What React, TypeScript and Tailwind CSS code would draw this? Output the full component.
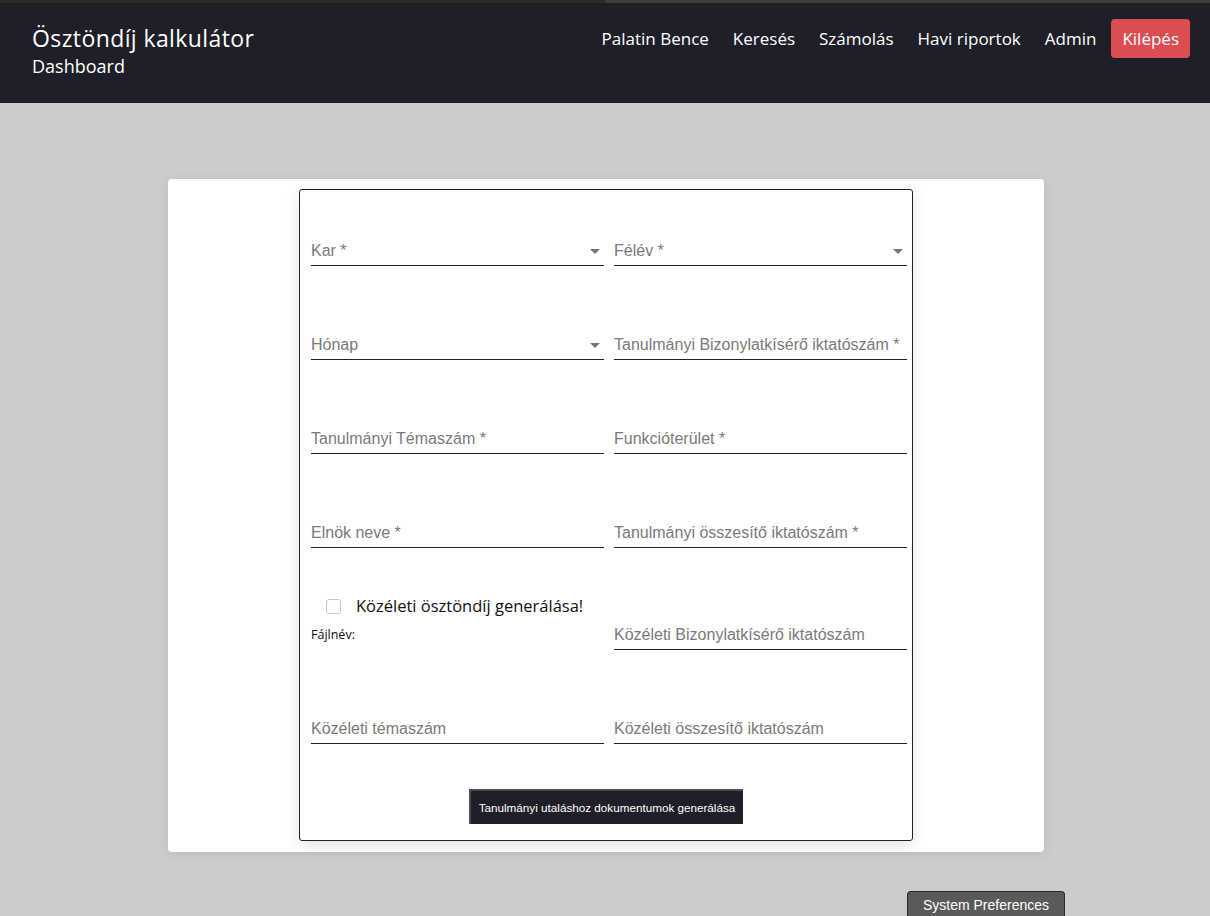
import { useState } from "react";

const navItems = ["Palatin Bence", "Keresés", "Számolás", "Havi riportok", "Admin"];

function Field({ label, select }: { label: string; select?: boolean }) {
  return (
    <div className="flex h-[48px] items-end justify-between border-b border-[#222228] pb-[4px] pr-[4px]">
      <span className="text-[16px] leading-[20px] text-[#7a7a7a] font-['Liberation_Sans',Arial,sans-serif]">
        {label}
      </span>
      {select && (
        <svg width="10" height="5" viewBox="0 0 10 5" className="mb-[7px]">
          <path d="M0 0h10L5 5z" fill="#757575" />
        </svg>
      )}
    </div>
  );
}

export default function App() {
  const [checked, setChecked] = useState(false);

  return (
    <div className="relative min-h-[916px] overflow-hidden bg-[#cccccc] font-['Open_Sans',sans-serif]">
      <div className="flex h-[3px]">
        <div className="w-[605px] bg-[#2a2a2a]" />
        <div className="flex-1 bg-[#3e3e3e]" />
      </div>

      <header className="flex h-[100px] items-start justify-between bg-[#1e1f28] pl-[32px] pr-[20px] text-white">
        <div className="pt-[21px]">
          <div className="text-[23px] leading-[28px] tracking-[0.4px]">Ösztöndíj kalkulátor</div>
          <div className="text-[18px] leading-[28px]">Dashboard</div>
        </div>
        <nav className="flex items-center gap-[24px] pt-[16px] text-[17px]">
          {navItems.map((n) => (
            <a key={n} className="leading-[39px]">
              {n}
            </a>
          ))}
          <a className="-ml-[9px] rounded-[4px] bg-[#dc4d52] px-[11px] leading-[39px]">Kilépés</a>
        </nav>
      </header>

      <main className="flex justify-center pt-[76px] pl-[2px]">
        <div className="w-[876px] rounded-[4px] bg-white pt-[10px] pb-[11px] shadow-[0_2px_12px_rgba(0,0,0,0.08)]">
          <div className="mx-auto w-[614px] rounded-[3px] border border-[#22222a] pt-[28px] pb-[16px] pl-[11px] pr-[5px] shadow-[0_4px_14px_rgba(0,0,0,0.12)]">
            <div className="grid grid-cols-2 gap-x-[10px]">
              <Field label="Kar *" select />
              <Field label="Félév *" select />
            </div>
            <div className="mt-[46px] grid grid-cols-2 gap-x-[10px]">
              <Field label="Hónap" select />
              <Field label="Tanulmányi Bizonylatkísérő iktatószám *" />
            </div>
            <div className="mt-[46px] grid grid-cols-2 gap-x-[10px]">
              <Field label="Tanulmányi Témaszám *" />
              <Field label="Funkcióterület *" />
            </div>
            <div className="mt-[46px] grid grid-cols-2 gap-x-[10px]">
              <Field label="Elnök neve *" />
              <Field label="Tanulmányi összesítő iktatószám *" />
            </div>
            <div className="mt-[44px] grid grid-cols-2 gap-x-[10px]">
              <div className="flex flex-col pt-[2px]">
                <label className="ml-[15px] flex items-center gap-[15px] text-[16.5px] leading-[24px] text-[#111]">
                  <span
                    onClick={() => setChecked(!checked)}
                    className="h-[15px] w-[15px] rounded-[3px] border border-[#c8c8cc] bg-white"
                  />
                  Közéleti ösztöndíj generálása!
                </label>
                <span className="mt-[8px] text-[12.5px] leading-[18px] text-[#111]">Fájlnév:</span>
              </div>
              <div className="pt-[10px]">
                <Field label="Közéleti Bizonylatkísérő iktatószám" />
              </div>
            </div>
            <div className="mt-[46px] grid grid-cols-2 gap-x-[10px]">
              <Field label="Közéleti témaszám" />
              <Field label="Közéleti összesítő iktatószám" />
            </div>
            <div className="mt-[45px] flex justify-center pr-[6px]">
              <button className="h-[35px] border-t-2 border-l-2 border-[#4b4d5c] bg-[#1e1f28] px-[8px] text-[11.7px] text-white font-['Liberation_Sans',Arial,sans-serif]">
                Tanulmányi utaláshoz dokumentumok generálása
              </button>
            </div>
          </div>
        </div>
      </main>

      <div className="absolute bottom-0 left-[907px] w-[158px] h-[25px] rounded-t-[4px] border border-b-0 border-[#2a2a2a] bg-[#5a5a5a] text-center text-[14px] leading-[26px] text-white font-['Liberation_Sans',Arial,sans-serif]">
        System Preferences
      </div>
    </div>
  );
}
